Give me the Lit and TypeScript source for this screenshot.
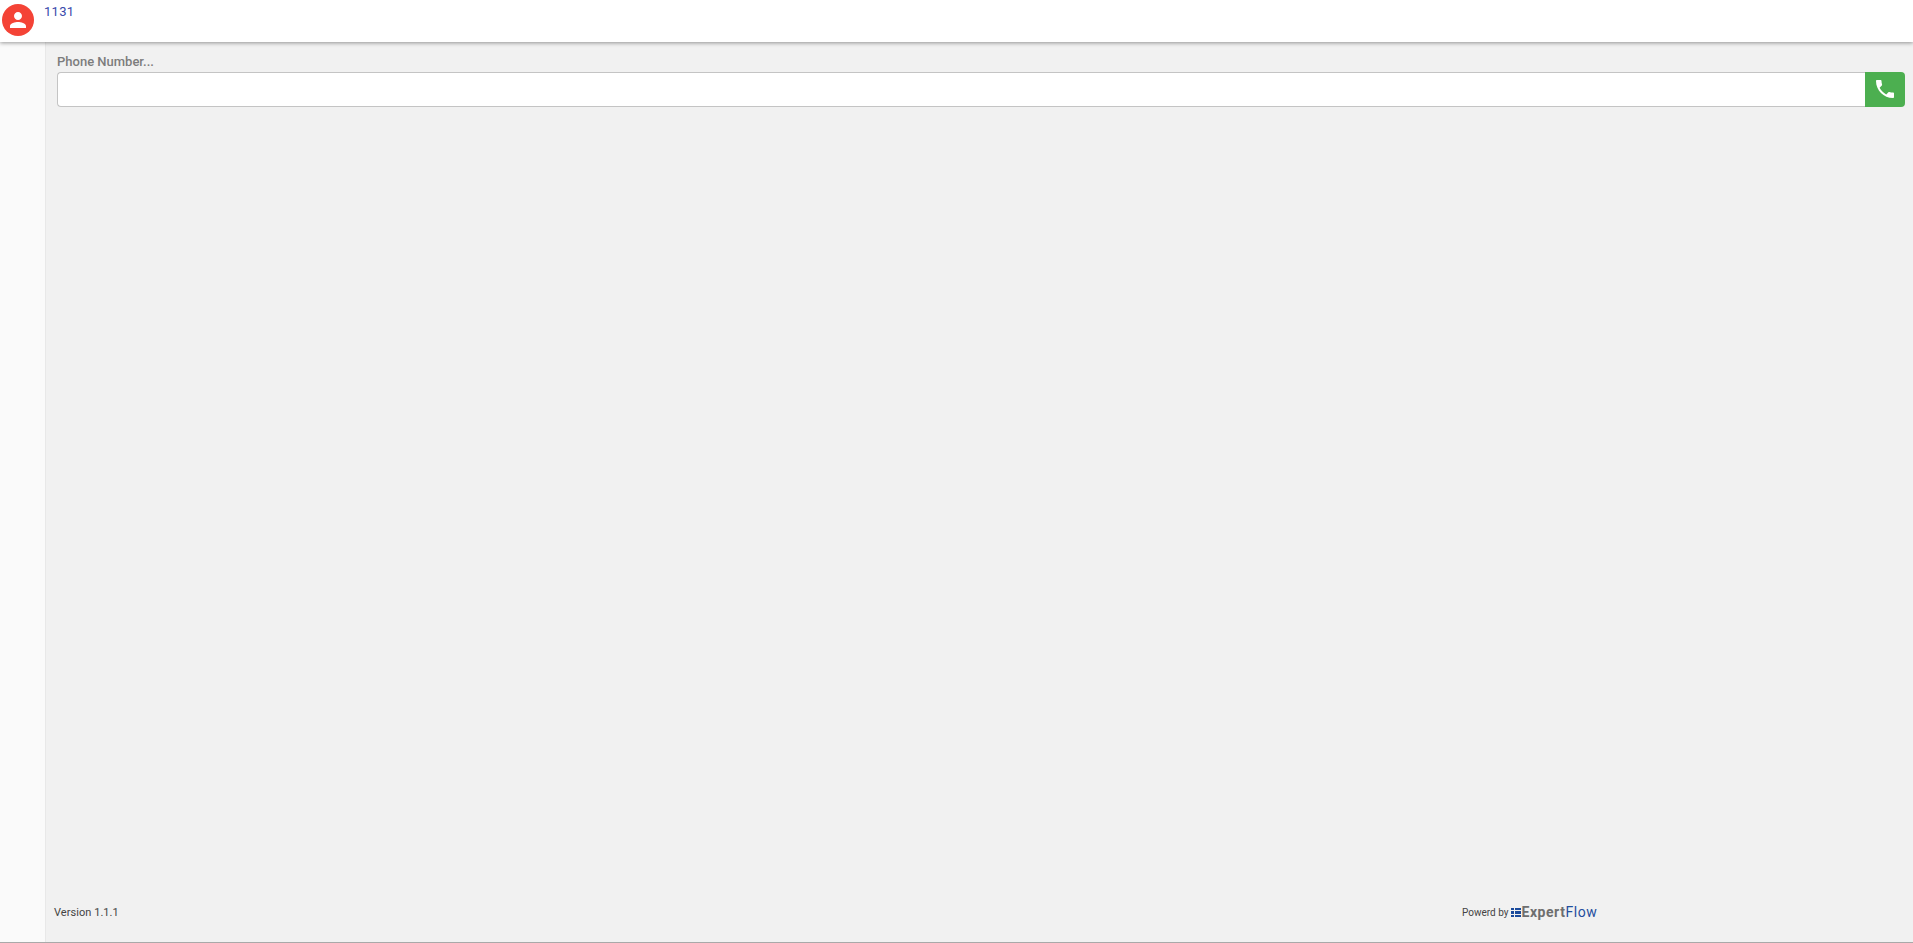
import { LitElement, html, css } from "lit";
import { customElement } from "lit/decorators.js";

@customElement("app-root")
export class AppRoot extends LitElement {
  static styles = css`
    :host { display: flex; flex-direction: column; height: 943px; overflow: hidden; font-family: Roboto, sans-serif; background: #f1f1f1; }
    .top { height: 42px; flex: none; background: #fff; display: flex; align-items: flex-start; gap: 10px; padding: 4px 0 0 2px; box-sizing: border-box; box-shadow: 0 1px 4px rgba(0,0,0,.4); position: relative; z-index: 1; }
    .avatar { width: 32px; height: 32px; border-radius: 50%; background: #f44336; display: flex; align-items: center; justify-content: center; }
    .avatar svg { width: 24px; height: 24px; fill: #fff; }
    .id { font-size: 13px; font-weight: 400; line-height: 15px; color: #3949ab; letter-spacing: .3px; }
    .body { flex: 1; display: flex; min-height: 0; border-bottom: 1px solid #a9a9a9; }
    .side { width: 45px; flex: none; background: #fafafa; border-right: 1px solid #e8e8e8; }
    .main { flex: 1; display: flex; flex-direction: column; padding: 12px 8px 0 11px; min-width: 0; }
    .label { font-size: 13px; font-weight: 500; line-height: 15px; color: #7d7d7d; margin-bottom: 3px; }
    .group { display: flex; height: 35px; }
    .input { flex: 1; background: #fff; border: 1px solid #c4c4c4; border-right: 0; border-radius: 4px 0 0 4px; box-sizing: border-box; }
    .call { width: 40px; background: #4caf50; border-radius: 0 4px 4px 0; display: flex; align-items: center; justify-content: center; padding-bottom: 2px; box-sizing: border-box; }
    .call svg { width: 24px; height: 24px; fill: #fff; }
    .foot { margin-top: auto; height: 36px; display: flex; align-items: flex-start; font-size: 11px; line-height: 13px; color: #444; margin-left: -3px; }
    .version { width: 1408px; letter-spacing: .05px; }
    .brand { display: flex; align-items: center; gap: 3px; font-size: 10px; }
    .logo { display: grid; grid-template-columns: 3px 6px; grid-auto-rows: 2.5px; gap: 1px; }
    .logo i { background: #1a4a9c; }
    .name { display: flex; font-size: 14px; letter-spacing: .55px; margin-left: -3px; }
    .expert { font-weight: 700; color: #6e6e6e; }
    .flow { color: #1f4e9e; }
  `;

  render() {
    return html`
      <div class="top">
        <div class="avatar">
          <svg viewBox="0 0 24 24"><path d="M12 12c2.21 0 4-1.79 4-4s-1.79-4-4-4-4 1.79-4 4 1.79 4 4 4zm0 2c-2.67 0-8 1.34-8 4v2h16v-2c0-2.66-5.33-4-8-4z"/></svg>
        </div>
        <div class="id">1131</div>
      </div>
      <div class="body">
        <div class="side"></div>
        <div class="main">
          <div class="label">Phone Number...</div>
          <div class="group">
            <div class="input"></div>
            <div class="call">
              <svg viewBox="0 0 24 24"><path d="M6.62 10.79c1.44 2.83 3.76 5.14 6.59 6.59l2.2-2.2c.27-.27.67-.36 1.02-.24 1.12.37 2.33.57 3.57.57.55 0 1 .45 1 1V20c0 .55-.45 1-1 1-9.39 0-17-7.61-17-17 0-.55.45-1 1-1h3.5c.55 0 1 .45 1 1 0 1.25.2 2.45.57 3.57.11.35.03.74-.25 1.02l-2.2 2.2z"/></svg>
            </div>
          </div>
          <div class="foot">
            <div class="version">Version 1.1.1</div>
            <div class="brand">
              <span>Powerd by</span>
              <span class="logo">${[0,1,2,3,4,5].map(() => html`<i></i>`)}</span>
              <span class="name"><span class="expert">Expert</span><span class="flow">Flow</span></span>
            </div>
          </div>
        </div>
      </div>
    `;
  }
}
